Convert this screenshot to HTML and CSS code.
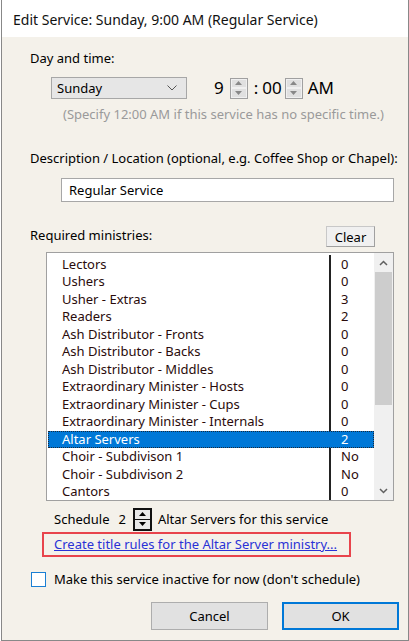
FILE: index.html
```html
<!DOCTYPE html>
<html>
<head>
<meta charset="utf-8">
<link rel="stylesheet" href="styles.css">
</head>
<body>
<div class="win">
  <div class="titlebar">Edit Service: Sunday, 9:00 AM (Regular Service)</div>
  <div class="content">
    <div class="label l-day">Day and time:</div>
    <div class="time-row">
      <div class="select">
        <span>Sunday</span>
        <svg class="chev" width="10" height="6" viewBox="0 0 10 6"><path d="M0.5 0.5 L5 5 L9.5 0.5" fill="none" stroke="#555" stroke-width="1"/></svg>
      </div>
      <div class="time">
        <span class="big h">9</span>
        <span class="spin"><span class="half"><svg width="7" height="4" viewBox="0 0 7 4"><path d="M0 4 L3.5 0 L7 4Z" fill="#888"/></svg></span><span class="half"><svg width="7" height="4" viewBox="0 0 7 4"><path d="M0 0 L3.5 4 L7 0Z" fill="#888"/></svg></span></span>
        <span class="big colon">:</span>
        <span class="big mm">00</span>
        <span class="spin"><span class="half"><svg width="7" height="4" viewBox="0 0 7 4"><path d="M0 4 L3.5 0 L7 4Z" fill="#888"/></svg></span><span class="half"><svg width="7" height="4" viewBox="0 0 7 4"><path d="M0 0 L3.5 4 L7 0Z" fill="#888"/></svg></span></span>
        <span class="big ampm">AM</span>
      </div>
    </div>
    <div class="hint">(Specify 12:00 AM if this service has no specific time.)</div>
    <div class="label l-desc">Description / Location (optional, e.g. Coffee Shop or Chapel):</div>
    <div class="input">Regular Service</div>
    <div class="req-row">
      <span class="label">Required ministries:</span>
      <span class="btn-clear">Clear</span>
    </div>
    <div class="list">
      <div class="rows">
        <div class="divider"></div>
        <div class="row"><span class="name">Lectors</span><span class="num">0</span></div>
        <div class="row"><span class="name">Ushers</span><span class="num">0</span></div>
        <div class="row"><span class="name">Usher - Extras</span><span class="num">3</span></div>
        <div class="row"><span class="name">Readers</span><span class="num">2</span></div>
        <div class="row"><span class="name">Ash Distributor - Fronts</span><span class="num">0</span></div>
        <div class="row"><span class="name">Ash Distributor - Backs</span><span class="num">0</span></div>
        <div class="row"><span class="name">Ash Distributor - Middles</span><span class="num">0</span></div>
        <div class="row"><span class="name">Extraordinary Minister - Hosts</span><span class="num">0</span></div>
        <div class="row"><span class="name">Extraordinary Minister - Cups</span><span class="num">0</span></div>
        <div class="row"><span class="name">Extraordinary Minister - Internals</span><span class="num">0</span></div>
        <div class="row sel"><span class="name">Altar Servers</span><span class="num">2</span></div>
        <div class="row"><span class="name">Choir - Subdivison 1</span><span class="num">No</span></div>
        <div class="row"><span class="name">Choir - Subdivison 2</span><span class="num">No</span></div>
        <div class="row"><span class="name">Cantors</span><span class="num">0</span></div>
      </div>
      <div class="scrollbar">
        <div class="sb-arrow"><svg width="9" height="6" viewBox="0 0 9 6"><path d="M1 5 L4.5 1.5 L8 5" fill="none" stroke="#606060" stroke-width="1.5"/></svg></div>
        <div class="sb-track"><div class="sb-thumb"></div></div>
        <div class="sb-arrow"><svg width="9" height="6" viewBox="0 0 9 6"><path d="M1 1 L4.5 4.5 L8 1" fill="none" stroke="#606060" stroke-width="1.5"/></svg></div>
      </div>
    </div>
    <div class="sched-row">
      <span>Schedule</span>
      <span class="sched-num">2</span>
      <span class="spin2"><span class="half2"><svg width="7" height="4" viewBox="0 0 7 4"><path d="M0 4 L3.5 0 L7 4Z" fill="#000"/></svg></span><span class="half2"><svg width="7" height="4" viewBox="0 0 7 4"><path d="M0 0 L3.5 4 L7 0Z" fill="#000"/></svg></span></span>
      <span>Altar Servers for this service</span>
    </div>
    <div class="linkbox"><a class="link" href="#">Create title rules for the Altar Server ministry...</a></div>
    <div class="check-row">
      <span class="checkbox"></span>
      <span>Make this service inactive for now (don't schedule)</span>
    </div>
    <div class="btn-row">
      <span class="btn">Cancel</span>
      <span class="btn ok">OK</span>
    </div>
  </div>
</div>
</body>
</html>
```

FILE: styles.css
```css
html, body {
  margin: 0;
  padding: 0;
  background: #ffffff;
}
body {
  font-family: "Noto Sans", "Open Sans", sans-serif;
  font-size: 13px;
  color: #000;
}
.win {
  margin-left: 1px;
  width: 408px;
  height: 641px;
  box-sizing: border-box;
  border: 1px solid #888;
  border-top: none;
  background: #f4f1ea;
  display: flex;
  flex-direction: column;
}
.titlebar {
  height: 37px;
  box-sizing: border-box;
  background: #fff;
  padding: 10px 0 0 11px;
  font-size: 14px;
  line-height: 20px;
  color: #111;
}
.content {
  flex: 1;
  display: flex;
  flex-direction: column;
  padding-left: 28px;
}
.label {
  line-height: 18px;
}
.l-day {
  margin-top: 12px;
}
.time-row {
  margin-top: 10px;
  height: 22px;
  display: flex;
  align-items: center;
}
.select {
  margin-left: 21px;
  width: 136px;
  height: 22px;
  box-sizing: border-box;
  border: 1px solid #a7a7a7;
  background: #e6e6e6;
  display: flex;
  align-items: center;
  justify-content: space-between;
  padding: 0 9px 0 5px;
}
.chev {
  display: block;
}
.time {
  display: flex;
  align-items: center;
  margin-left: 27px;
  height: 22px;
}
.big {
  font-size: 17px;
  line-height: 22px;
}
.h { margin-right: 6px; }
.colon { margin: 0 4px 0 6px; }
.mm { margin-right: 3px; }
.ampm { margin-left: 5px; }
.spin {
  width: 18px;
  height: 21px;
  box-sizing: border-box;
  border: 1px solid #a0a0a0;
  background: #dcdcdc;
  display: flex;
  flex-direction: column;
}
.half {
  flex: 1;
  display: flex;
  align-items: center;
  justify-content: center;
  border: 1px solid #f0f0f0;
  background: #e0e0e0;
}
.half svg { display: block; }
.hint {
  margin-top: 6px;
  margin-left: 33px;
  line-height: 18px;
  color: #9a9a9a;
}
.l-desc {
  margin-top: 26px;
}
.input {
  margin-top: 11px;
  margin-left: 31px;
  width: 333px;
  height: 24px;
  box-sizing: border-box;
  border: 1px solid #a7a7a7;
  background: #fff;
  padding-left: 7px;
  line-height: 22px;
}
.req-row {
  margin-top: 23px;
  height: 22px;
  display: flex;
  align-items: center;
  justify-content: space-between;
  width: 345px;
}
.req-row .label {
  margin-top: -3px;
}
.btn-clear {
  width: 49px;
  height: 21px;
  box-sizing: border-box;
  border: 1px solid #c8c8c8;
  border-right-color: #a0a0a0;
  border-bottom-color: #a0a0a0;
  background: #f0f0f0;
  text-align: center;
  line-height: 20px;
  font-size: 13px;
}
.list {
  margin-top: 5px;
  margin-left: 16px;
  width: 348px;
  height: 249px;
  box-sizing: border-box;
  border: 1px solid #a0a0a0;
  background: #fff;
  display: flex;
}
.rows {
  flex: 1;
  position: relative;
  padding: 2.5px 0 0 1px;
}
.divider {
  position: absolute;
  left: 282px;
  top: 2px;
  bottom: 0;
  width: 2px;
  background: #222;
}
.row {
  height: 17.5px;
  line-height: 17.5px;
  display: flex;
  color: #2a0b0b;
  position: relative;
}
.name {
  width: 275px;
  padding-left: 14px;
}
.num {
  padding-left: 4px;
}
.row.sel {
  background: #0078d7;
  color: #fff;
  outline: 1px dotted #1b2a3a;
  outline-offset: -1px;
}
.scrollbar {
  width: 19px;
  background: #f0f0f0;
  display: flex;
  flex-direction: column;
}
.sb-arrow {
  height: 19px;
  display: flex;
  align-items: center;
  justify-content: center;
}
.sb-arrow svg { display: block; }
.sb-track {
  flex: 1;
  padding: 0 1px;
}
.sb-thumb {
  height: 133px;
  background: #cdcdcd;
}
.sched-row {
  margin-top: 7px;
  margin-left: 24px;
  height: 22px;
  display: flex;
  align-items: center;
}
.sched-num {
  margin-left: 9px;
  margin-right: 7px;
}
.spin2 {
  width: 19px;
  height: 23px;
  box-sizing: border-box;
  border: 2px solid #111;
  background: #e8e8e8;
  display: flex;
  flex-direction: column;
  margin-right: 6px;
}
.half2 {
  flex: 1;
  display: flex;
  align-items: center;
  justify-content: center;
}
.half2 + .half2 {
  border-top: 1px solid #111;
}
.half2 svg { display: block; }
.linkbox {
  margin-top: 2px;
  margin-left: 12px;
  width: 309px;
  height: 25px;
  box-sizing: border-box;
  border: 2px solid #e8444c;
  padding-left: 10px;
  line-height: 21px;
}
.link {
  color: #2a32d6;
  text-decoration: underline;
}
.check-row {
  margin-top: 14px;
  height: 16px;
  display: flex;
  align-items: center;
}
.checkbox {
  width: 15px;
  height: 15px;
  box-sizing: border-box;
  border: 1px solid #1a7fd4;
  background: #fff;
  margin-left: 1px;
  margin-right: 8px;
}
.btn-row {
  margin-top: 15px;
  display: flex;
  margin-left: 121px;
  gap: 14px;
}
.btn {
  width: 117px;
  height: 28px;
  box-sizing: border-box;
  border: 1px solid #adadad;
  background: #e1e1e1;
  text-align: center;
  line-height: 26px;
}
.btn.ok {
  border: 2px solid #0078d7;
  line-height: 24px;
}
```
